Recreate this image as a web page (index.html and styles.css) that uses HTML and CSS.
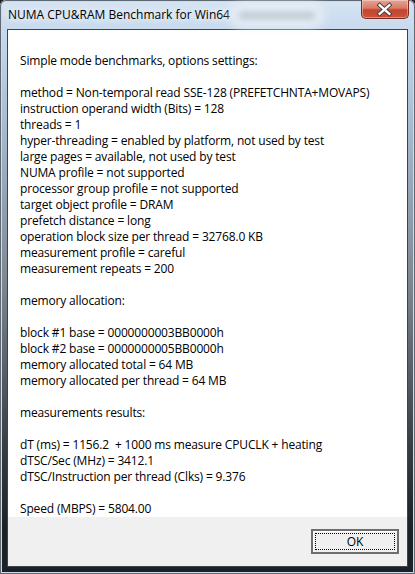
FILE: index.html
```html
<!DOCTYPE html>
<html>
<head>
<meta charset="utf-8">
<link rel="stylesheet" href="styles.css">
</head>
<body>
<div class="window">
  <div class="titlebar">
    <span class="title">NUMA CPU&amp;RAM Benchmark for Win64</span>
    <span class="glow"></span>
    <span class="close">
      <svg width="48" height="19" viewBox="0 0 48 19">
        <path d="M19 5 L29 14 M29 5 L19 14" stroke="#3a3a3a" stroke-width="4.2" stroke-linecap="square"/>
        <path d="M19 5 L29 14 M29 5 L19 14" stroke="#ffffff" stroke-width="2.4" stroke-linecap="square"/>
      </svg>
    </span>
  </div>
  <div class="client">
    <div class="report">Simple mode benchmarks, options settings:

method = Non-temporal read SSE-128 (PREFETCHNTA+MOVAPS)
instruction operand width (Bits) = 128
threads = 1
hyper-threading = enabled by platform, not used by test
large pages = available, not used by test
NUMA profile = not supported
processor group profile = not supported
target object profile = DRAM
prefetch distance = long
operation block size per thread = 32768.0 KB
measurement profile = careful
measurement repeats = 200

memory allocation:

block #1 base = 0000000003BB0000h
block #2 base = 0000000005BB0000h
memory allocated total = 64 MB
memory allocated per thread = 64 MB

measurements results:

dT (ms) = 1156.2  + 1000 ms measure CPUCLK + heating
dTSC/Sec (MHz) = 3412.1
dTSC/Instruction per thread (Clks) = 9.376

Speed (MBPS) = 5804.00</div>
    <div class="footer">
      <button class="ok"><span class="focus">OK</span></button>
    </div>
  </div>
</div>
</body>
</html>
```

FILE: styles.css
```css
html, body {
  margin: 0;
  padding: 0;
  background: #1c2127;
}
.window {
  width: 415px;
  height: 574px;
  box-sizing: border-box;
  display: flex;
  flex-direction: column;
  border-radius: 6px 6px 0 0;
  background: linear-gradient(to bottom, #d6e4f3 0px, #c3d6ec 40px, #a9bcd2 120px, #7d8893 280px, #3a4048 440px, #1c2127 530px);
  box-shadow: inset 0 0 0 1px #5d6873, inset 0 0 0 2px #cfdbe8;
  padding: 0 7px 7px 7px;
  font-family: "Open Sans", "Noto Sans", sans-serif;
}
.titlebar {
  height: 29px;
  display: flex;
  align-items: flex-start;
  position: relative;
}
.title {
  font-size: 12px;
  color: #000;
  margin-top: 6px;
  margin-left: 1px;
  text-shadow: 0 0 6px #f4f8fc, 0 0 10px #f4f8fc;
}
.glow {
  width: 78px;
  height: 9px;
  margin-left: 8px;
  margin-top: 11px;
  border-radius: 5px;
  background: #c2ccd6;
  filter: blur(3px);
  box-shadow: 0 0 8px 7px #eef3f9;
}
.close {
  margin-left: auto;
  margin-right: -1px;
  width: 48px;
  height: 19px;
  box-sizing: border-box;
  border: 1px solid #7a2a20;
  border-top: none;
  border-radius: 0 0 5px 5px;
  background: linear-gradient(to bottom, #e6a597 0%, #d97a66 45%, #c4452e 55%, #c9553c 100%);
  box-shadow: inset 0 0 0 1px rgba(255,255,255,0.35);
  display: flex;
}
.close svg {
  margin-left: -1px;
}
.client {
  flex: 1;
  display: flex;
  flex-direction: column;
  border: 1px solid #3c434b;
  background: #f0f0f0;
}
.report {
  flex: 1;
  background: #fff;
  white-space: pre;
  font-size: 12px;
  letter-spacing: -0.16px;
  line-height: 16px;
  color: #000;
  padding: 23px 0 0 12px;
}
.footer {
  height: 49px;
  display: flex;
  justify-content: flex-end;
  align-items: flex-start;
  padding: 12px 8px 0 0;
  box-sizing: border-box;
}
.ok {
  width: 88px;
  height: 25px;
  box-sizing: border-box;
  border: 2px solid #6e6e6e;
  background: #f0f0f0;
  padding: 2px;
  font-family: inherit;
  font-size: 12px;
  color: #000;
  display: flex;
  box-shadow: inset 1px 1px 0 #ffffff;
}
.focus {
  flex: 1;
  border: 1px dotted #000;
  display: flex;
  align-items: center;
  justify-content: center;
}
```
